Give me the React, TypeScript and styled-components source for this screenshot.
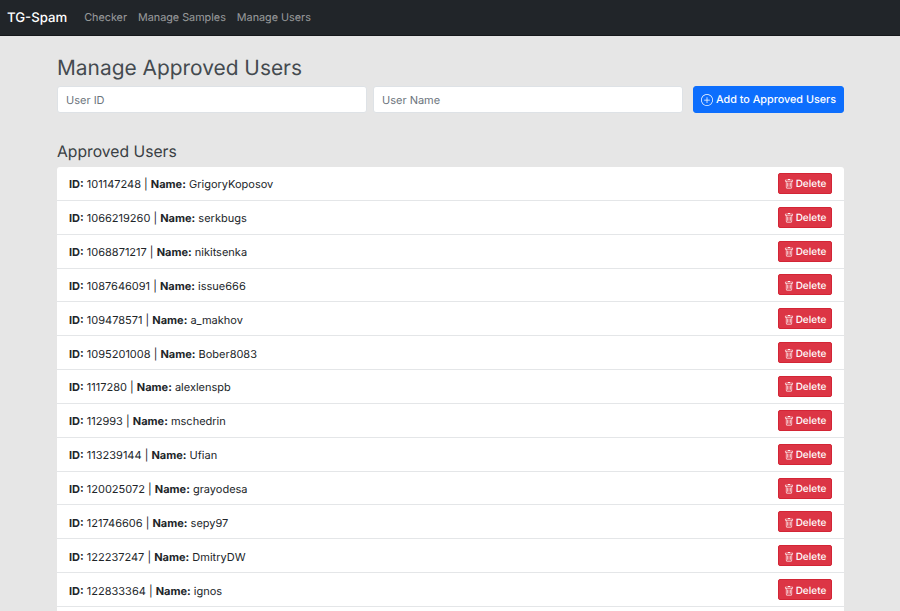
import React from "react";
import styled, { createGlobalStyle } from "styled-components";

const FONT = `Inter, "Liberation Sans", Arial, sans-serif`;

const Global = createGlobalStyle`
  html, body { margin: 0; padding: 0; background: #e6e6e6; overflow: hidden; height: 611px; }
  body { font-family: ${FONT}; color: #212529; font-size: 11px; text-rendering: geometricPrecision; }
  * { box-sizing: border-box; }
`;

const Navbar = styled.nav`
  height: 36px;
  background: #212529;
  border-bottom: 1px solid #15181b;
  display: flex;
  align-items: center;
  padding: 0 7px;
`;
const Brand = styled.a`
  color: #fff;
  font-size: 13.2px;
  font-weight: 500;
  margin-right: 17px;
`;
const NavLinks = styled.div`
  display: flex;
  gap: 11px;
`;
const NavLink = styled.a`
  color: rgba(255, 255, 255, 0.55);
  font-size: 10.8px;
`;
const Container = styled.main`
  width: 787px;
  margin-left: 57px;
`;
const Title = styled.h1`
  font-size: 20.9px;
  font-weight: 400;
  line-height: 29px;
  margin: 18px 0 3px;
  color: #444a4f;
`;
const FormRow = styled.form`
  display: flex;
  height: 27px;
`;
const TextInput = styled.input`
  height: 27px;
  background: #fff;
  border: 1px solid #dee2e6;
  border-radius: 3px;
  padding: 0 8px;
  font: 11px ${FONT};
  text-rendering: geometricPrecision;
  &::placeholder { color: #6c757d; }
`;
const IdInput = styled(TextInput)`
  width: 310px;
  margin-right: 6px;
`;
const NameInput = styled(TextInput)`
  width: 309.5px;
  margin-right: 10.5px;
`;
const AddButton = styled.button`
  flex: 1;
  background: #0d6efd;
  color: #fff;
  border: 1px solid #0d6efd;
  border-radius: 3px;
  font: 500 10.8px ${FONT};
  text-rendering: geometricPrecision;
  display: flex;
  align-items: center;
  justify-content: center;
  gap: 3px;
  padding: 0;
`;
const SubTitle = styled.h2`
  font-size: 15.7px;
  font-weight: 400;
  line-height: 20px;
  margin: 29px 0 5px;
  color: #3a3f44;
`;
const List = styled.ul`
  list-style: none;
  margin: 0;
  padding: 0;
  background: #fff;
  border-radius: 3px;
`;
const Row = styled.li`
  height: 33.85px;
  padding: 0 12px;
  display: flex;
  align-items: center;
  justify-content: space-between;
  border-bottom: 1px solid #e4e6e8;
`;
const UserLabel = styled.span`
  padding-top: 2px;
`;
const DeleteButton = styled.button`
  width: 54px;
  height: 21px;
  background: #dc3545;
  color: #fff;
  border: 1px solid #d32535;
  border-radius: 2px;
  font: 500 10px ${FONT};
  text-rendering: geometricPrecision;
  display: flex;
  align-items: center;
  justify-content: center;
  gap: 2px;
  padding: 2px 0 0;
`;

const PlusIcon = () => (
  <svg width="12" height="12" viewBox="0 0 16 16" fill="currentColor">
    <path d="M8 15A7 7 0 1 1 8 1a7 7 0 0 1 0 14zm0 1A8 8 0 1 0 8 0a8 8 0 0 0 0 16z" />
    <path d="M8 4a.5.5 0 0 1 .5.5v3h3a.5.5 0 0 1 0 1h-3v3a.5.5 0 0 1-1 0v-3h-3a.5.5 0 0 1 0-1h3v-3A.5.5 0 0 1 8 4z" />
  </svg>
);
const TrashIcon = () => (
  <svg width="10" height="10" viewBox="0 0 16 16" fill="currentColor">
    <path d="M5.5 5.5A.5.5 0 0 1 6 6v6a.5.5 0 0 1-1 0V6a.5.5 0 0 1 .5-.5zm2.5 0a.5.5 0 0 1 .5.5v6a.5.5 0 0 1-1 0V6a.5.5 0 0 1 .5-.5zm3 .5a.5.5 0 0 0-1 0v6a.5.5 0 0 0 1 0V6z" />
    <path fillRule="evenodd" d="M14.5 3a1 1 0 0 1-1 1H13v9a2 2 0 0 1-2 2H5a2 2 0 0 1-2-2V4h-.5a1 1 0 0 1-1-1V2a1 1 0 0 1 1-1H6a1 1 0 0 1 1-1h2a1 1 0 0 1 1 1h3.5a1 1 0 0 1 1 1v1zM4.118 4 4 4.059V13a1 1 0 0 0 1 1h6a1 1 0 0 0 1-1V4.059L11.882 4H4.118zM2.5 3V2h11v1h-11z" />
  </svg>
);

const users: [string, string][] = [
  ["101147248", "GrigoryKoposov"],
  ["1066219260", "serkbugs"],
  ["1068871217", "nikitsenka"],
  ["1087646091", "issue666"],
  ["109478571", "a_makhov"],
  ["1095201008", "Bober8083"],
  ["1117280", "alexlenspb"],
  ["112993", "mschedrin"],
  ["113239144", "Ufian"],
  ["120025072", "grayodesa"],
  ["121746606", "sepy97"],
  ["122237247", "DmitryDW"],
  ["122833364", "ignos"],
];

export default function App() {
  return (
    <>
      <Global />
      <Navbar>
        <Brand>TG-Spam</Brand>
        <NavLinks>
          <NavLink>Checker</NavLink>
          <NavLink>Manage Samples</NavLink>
          <NavLink>Manage Users</NavLink>
        </NavLinks>
      </Navbar>
      <Container>
        <Title>Manage Approved Users</Title>
        <FormRow>
          <IdInput placeholder="User ID" />
          <NameInput placeholder="User Name" />
          <AddButton type="button"><PlusIcon /> Add to Approved Users</AddButton>
        </FormRow>
        <SubTitle>Approved Users</SubTitle>
        <List>
          {users.map(([id, name]) => (
            <Row key={id}>
              <UserLabel><b>ID:</b> {id} | <b>Name:</b> {name}</UserLabel>
              <DeleteButton type="button"><TrashIcon /> Delete</DeleteButton>
            </Row>
          ))}
          <Row />
        </List>
      </Container>
    </>
  );
}
